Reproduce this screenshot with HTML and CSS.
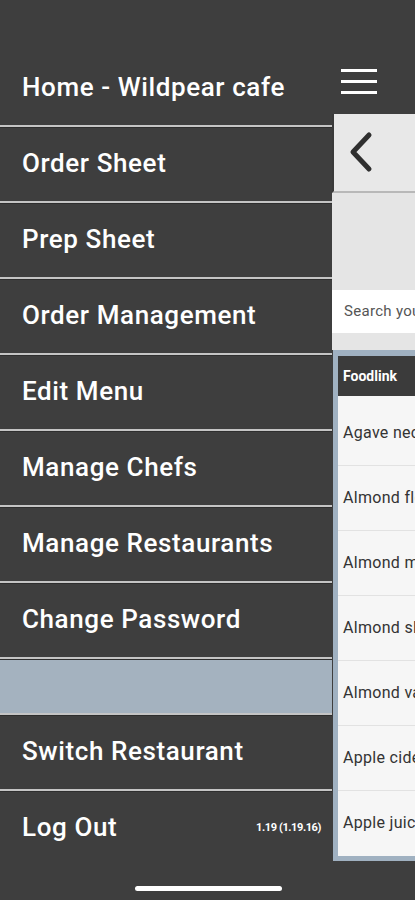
FILE: index.html
```html
<!DOCTYPE html>
<html lang="en">

<head>
    <meta charset="UTF-8">
    <link rel="stylesheet" href="styles.css">
    <title>Wildpear cafe</title>
</head>

<body>
    <div id="screen">
        <!-- side menu -->
        <div id="drawer">
            <div class="drawer-head">Home - Wildpear cafe</div>
            <a class="item" href="#">Order Sheet</a>
            <a class="item" href="#">Prep Sheet</a>
            <a class="item" href="#">Order Management</a>
            <a class="item" href="#">Edit Menu</a>
            <a class="item" href="#">Manage Chefs</a>
            <a class="item" href="#">Manage Restaurants</a>
            <a class="item" href="#">Change Password</a>
            <div class="item blank"></div>
            <a class="item" href="#">Switch Restaurant</a>
            <div class="item last">
                <a href="#">Log Out</a>
                <span class="version">1.19 (1.19.16)</span>
            </div>
        </div>

        <!-- app behind the menu -->
        <div id="app">
            <div class="app-top">
                <div class="burger"><span></span><span></span><span></span></div>
            </div>
            <div class="app-nav">
                <svg width="26" height="42" viewBox="0 0 26 42">
                    <polyline points="21,4 5,21 21,38" fill="none" stroke="#2f2f2f" stroke-width="5" stroke-linecap="round" stroke-linejoin="round" />
                </svg>
            </div>
            <div class="app-gap"></div>
            <div class="search">Search your items</div>
            <div class="card">
                <div class="card-head">Foodlink</div>
                <div class="row">Agave nectar</div>
                <div class="row">Almond flour</div>
                <div class="row">Almond milk</div>
                <div class="row">Almond slivers</div>
                <div class="row">Almond vanilla</div>
                <div class="row">Apple cider</div>
                <div class="row">Apple juice</div>
            </div>
        </div>

        <div class="home-bar"></div>
    </div>
</body>

</html>
```

FILE: styles.css
```css
@charset "UTF-8";

/* ========BASIC======== */
body {
    margin: 0;
    padding: 0;
    font-family: Roboto, "DejaVu Sans", sans-serif;
    color: #fff;
    background: #3e3e3e;
}

a {
    color: #fff;
    text-decoration: none;
}

#screen {
    position: relative;
    display: flex;
    width: 415px;
    height: 900px;
    overflow: hidden;
}


/* ========DRAWER======== */
#drawer {
    flex: 0 0 332px;
    width: 332px;
    background: #3e3e3e;
}

.drawer-head {
    display: flex;
    align-items: center;
    height: 125px;
    padding: 48px 0 0 22px;
    box-sizing: border-box;
    font-size: 26px;
    font-weight: 500;
    letter-spacing: 0.6px;
}

.item {
    display: flex;
    align-items: center;
    height: 76px;
    padding: 0 0 2px 22px;
    box-sizing: border-box;
    font-size: 26px;
    font-weight: 500;
    letter-spacing: 0.6px;
    border-top: 2px solid #c4c4c4;
    box-shadow: inset 0 1px 0 #2e2e2e;
}

.item.blank {
    height: 56px;
    background: #a4b2bf;
}

.item.last {
    justify-content: space-between;
    padding-right: 11px;
}

.version {
    font-size: 11px;
    font-weight: 700;
    letter-spacing: -0.4px;
}


/* ========APP======== */
#app {
    flex: 1;
    display: flex;
    flex-direction: column;
    min-width: 0;
}

.app-top {
    height: 114px;
    background: #3e3e3e;
}

.burger {
    display: flex;
    flex-direction: column;
    gap: 8px;
    width: 36px;
    margin: 69px 0 0 9px;
}

.burger span {
    height: 3px;
    background: #fff;
}

.app-nav {
    height: 79px;
    padding: 17px 0 0 14px;
    box-sizing: border-box;
    background: #e8e8e8;
    border-bottom: 2px solid #b8b8b8;
    border-left: 2px solid #3a3a3a;
}

.app-gap {
    height: 97px;
    background: #e5e5e5;
}

.search {
    height: 43px;
    padding-left: 12px;
    line-height: 43px;
    font-size: 15px;
    letter-spacing: 0.3px;
    color: #555;
    white-space: nowrap;
    background: #fff;
    border-bottom: 17px solid #e5e5e5;
}

.card {
    margin-left: 1px;
    border: 5px solid #a0b1c1;
    border-right: 0;
    border-top-width: 6px;
    background: #f6f6f6;
}

.card-head {
    height: 40px;
    padding-left: 5px;
    line-height: 40px;
    font-size: 14px;
    font-weight: 700;
    background: #3b3b3b;
    margin-bottom: 5px;
}

.row {
    height: 65px;
    padding-left: 5px;
    line-height: 64px;
    font-size: 16px;
    letter-spacing: 0.3px;
    color: #333;
    white-space: nowrap;
    border-bottom: 1px solid #e2e2e2;
    box-sizing: border-box;
}

.row:last-child {
    border-bottom: 0;
}

.home-bar {
    position: absolute;
    left: 135px;
    bottom: 9px;
    width: 147px;
    height: 5px;
    border-radius: 3px;
    background: #fff;
    z-index: 2;
}
```
